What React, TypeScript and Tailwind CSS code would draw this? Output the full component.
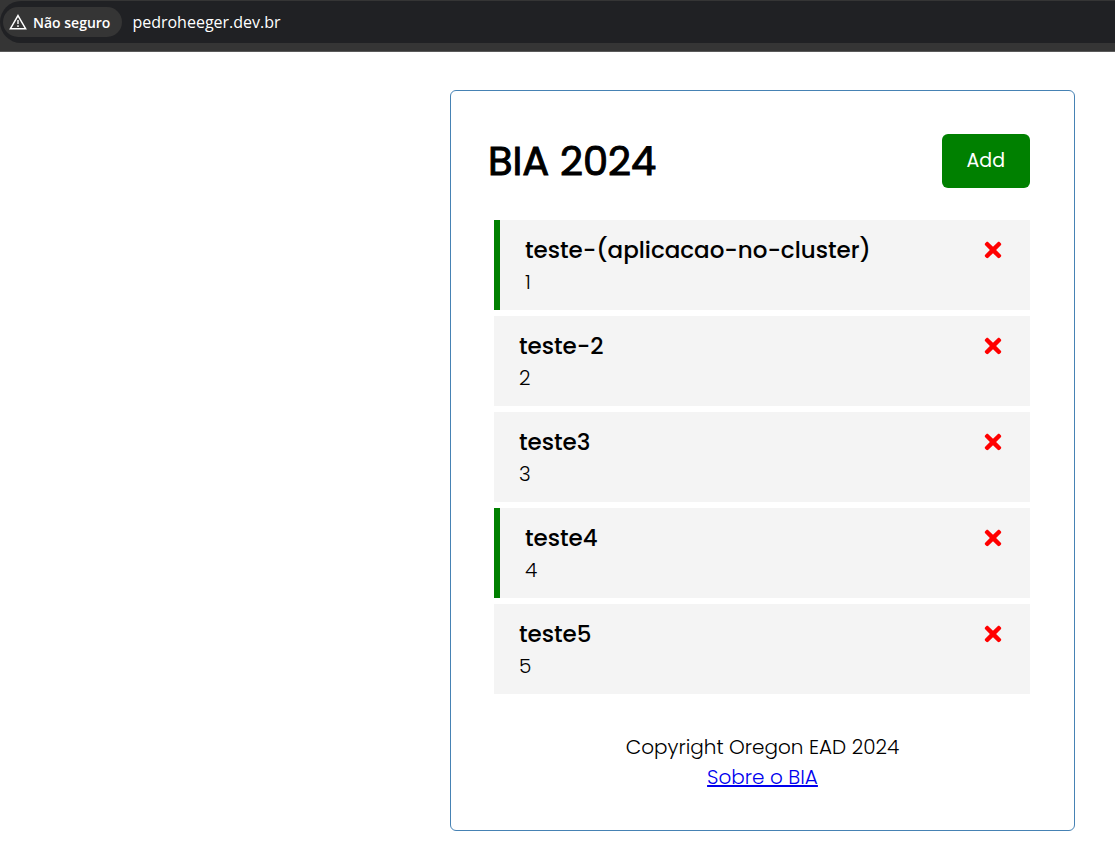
import { useState } from "react";
import { FaTimes } from "react-icons/fa";

type Task = { id: number; title: string; day: string; reminder: boolean };

const initialTasks: Task[] = [
  { id: 1, title: "teste-(aplicacao-no-cluster)", day: "1", reminder: true },
  { id: 2, title: "teste-2", day: "2", reminder: false },
  { id: 3, title: "teste3", day: "3", reminder: false },
  { id: 4, title: "teste4", day: "4", reminder: true },
  { id: 5, title: "teste5", day: "5", reminder: false },
];

function AddressBar() {
  return (
    <div className="h-[52px] border-b border-[#5a5a5a] bg-[#353535] pt-px font-['Open_Sans',sans-serif] text-white">
      <div className="flex h-[42px] items-center gap-[10px] rounded-l-full bg-[#202124] pl-[3px]">
        <button
          type="button"
          className="flex h-[30px] items-center gap-[6px] rounded-full bg-[#353535] pr-3 pl-[6px] text-[14px] font-semibold"
        >
          <svg width="18" height="18" viewBox="0 0 18 18" fill="none" stroke="currentColor" aria-hidden="true">
            <path d="M9 2.6 16.6 15.7H1.4Z" strokeWidth="1.5" />
            <path d="M9 7v4M9 12.3v1.6" strokeWidth="1.4" />
          </svg>
          Não seguro
        </button>
        <span className="text-[16px]">pedroheeger.dev.br</span>
      </div>
    </div>
  );
}

function TaskRow({ task, onDelete }: { task: Task; onDelete: () => void }) {
  return (
    <li
      className={`flex h-[90px] items-start justify-between bg-[#f4f4f4] pt-3 pr-[25px] pl-[25px] ${
        task.reminder ? "border-l-6 border-[#008000]" : ""
      }`}
    >
      <div>
        <h3 className="text-[23px] leading-[36px] font-medium">{task.title}</h3>
        <p className="text-[20px] leading-[28px]">{task.day}</p>
      </div>
      <button
        type="button"
        aria-label={`Delete ${task.title}`}
        onClick={onDelete}
        className="flex h-[36px] cursor-pointer items-center text-[24px] text-[#ff0000]"
      >
        <FaTimes />
      </button>
    </li>
  );
}

export default function App() {
  const [tasks, setTasks] = useState(initialTasks);

  return (
    <div className="min-h-screen bg-white text-black">
      <AddressBar />
      <main className="flex justify-end px-10 py-[38px] font-['Poppins','Inter',sans-serif] font-light">
        <div className="w-full max-w-[625px] rounded-md border border-[#4682b4] px-[37px] pt-[43px] pb-[38px]">
          <header className="flex items-center justify-between pr-[7px]">
            <h1 className="text-[40px] leading-[54px] font-normal [-webkit-text-stroke:1px_currentColor]">BIA 2024</h1>
            <button
              type="button"
              className="h-[54px] cursor-pointer rounded-md bg-[#008000] px-[25px] pt-px text-[19px] font-normal text-white"
            >
              Add
            </button>
          </header>
          <ul className="mt-8 mr-[7px] ml-[6px] flex flex-col gap-[6px]">
            {tasks.map((task) => (
              <TaskRow
                key={task.id}
                task={task}
                onDelete={() => setTasks(tasks.filter((t) => t.id !== task.id))}
              />
            ))}
          </ul>
          <footer className="mt-[38px] text-center text-[20px] leading-[30px]">
            <p>Copyright Oregon EAD 2024</p>
            <a href="#about" className="text-[#0000ee] underline">
              Sobre o BIA
            </a>
          </footer>
        </div>
      </main>
    </div>
  );
}
